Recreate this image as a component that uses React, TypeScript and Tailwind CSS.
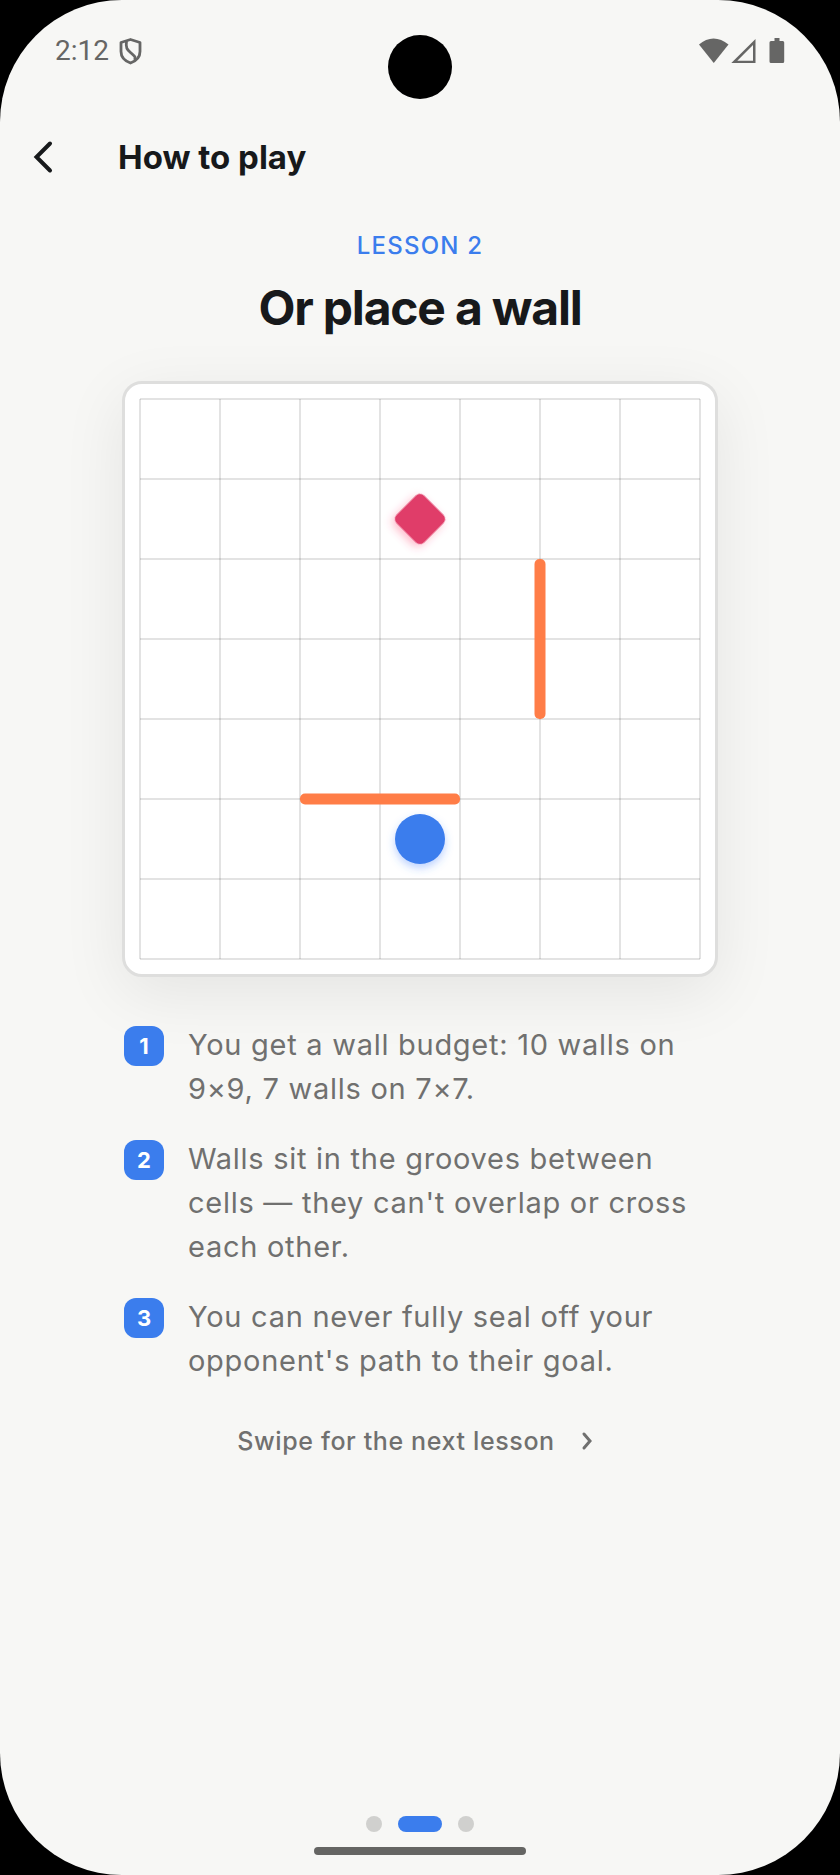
import React from 'react';

const steps = [
  'You get a wall budget: 10 walls on 9×9, 7 walls on 7×7.',
  "Walls sit in the grooves between cells — they can't overlap or cross each other.",
  "You can never fully seal off your opponent's path to their goal.",
];

const lessons = [1, 2, 3];
const gridLines = [0, 1, 2, 3, 4, 5, 6, 7];

const StatusBar = () => {
  return (
    <div className="flex items-start pt-[35px] px-[55px] text-[#666665]">
      <div className="flex flex-1 items-center gap-2 h-8">
        <span className="font-[Roboto,sans-serif] text-[28px] leading-8">2:12</span>
        <svg className="w-7 h-8" viewBox="0 0 28 32" fill="none" stroke="currentColor" strokeWidth="2.800">
          <path d="M13.500 4.500 23 7.500v9c0 5.500-4 9.500-9.500 11.500C8 26 4 22 4 16.500v-9z" strokeLinejoin="round" />
          <path d="M9.500 6C8.500 13 10 14.500 14 18S19 22 17.500 25" />
        </svg>
      </div>
      <div className="w-16 h-16 rounded-full bg-black" />
      <div className="flex flex-1 items-center justify-end h-8">
        <svg className="w-[86px] h-8" viewBox="0 0 86 32" fill="currentColor">
          <path d="M0 9.500C9 1.500 20 1.500 29.500 9.500L14.750 28z" />
          <path d="M56.500 4v24H32.300zM54 10 38.300 25.700H54z" fillRule="evenodd" />
          <path d="M75.500 3h5v3h3.200a1.500 1.500 0 0 1 1.500 1.500v19a1.500 1.500 0 0 1-1.500 1.500H72a1.500 1.500 0 0 1-1.500-1.500v-19A1.500 1.500 0 0 1 72 6h3.500z" />
        </svg>
      </div>
    </div>
  );
};

const Board = () => {
  return (
    <div className="w-full max-w-[596px] rounded-[20px] border-[3px] border-[#dededd] bg-white p-[15px] shadow-[0_16px_64px_rgba(0,0,0,0.08)]">
      <svg className="block w-full overflow-visible" viewBox="0 0 560 560" role="img" aria-label="Board with two walls">
        <defs>
          <filter id="redGlow" x="-50%" y="-50%" width="200%" height="200%">
            <feDropShadow dx="0" dy="4" stdDeviation="4" floodColor="#ff3c69" floodOpacity="0.35" />
          </filter>
          <filter id="blueGlow" x="-50%" y="-50%" width="200%" height="200%">
            <feDropShadow dx="0" dy="4" stdDeviation="4" floodColor="#3b7dff" floodOpacity="0.35" />
          </filter>
        </defs>
        <g stroke="#000" strokeOpacity="0.11" strokeWidth="2">
          {gridLines.map((n) => (
            <line key={`v${n}`} x1={n * 80} y1="0" x2={n * 80} y2="560" />
          ))}
          {gridLines.map((n) => (
            <line key={`h${n}`} x1="0" y1={n * 80} x2="560" y2={n * 80} />
          ))}
        </g>
        {/* walls */}
        <rect x="394.500" y="160" width="11" height="160" rx="5" fill="#ff7d47" />
        <rect x="160" y="394.500" width="160" height="11" rx="5" fill="#ff7d47" />
        {/* pieces */}
        <g transform="translate(280 120) rotate(45)">
          <rect x="-19.500" y="-19.500" width="39" height="39" rx="6" fill="#e03c69" filter="url(#redGlow)" />
        </g>
        <circle cx="280" cy="440" r="25" fill="#3b7ded" filter="url(#blueGlow)" />
      </svg>
    </div>
  );
};

const App = () => {
  return (
    <div className="min-h-screen flex bg-black font-[Inter,sans-serif]">
      <div className="flex flex-1 flex-col rounded-[122px] bg-[#f7f7f5]">
        <StatusBar />

        <header className="flex items-center h-[116px] px-6">
          <button className="w-12 h-12 text-[#17191b]" aria-label="Back">
            <svg className="w-9 h-12" viewBox="0 0 36 48" fill="none" stroke="currentColor" strokeWidth="4">
              <path d="M26 10.500 12.500 24 26 37.500" strokeLinecap="round" />
            </svg>
          </button>
          <h1 className="ml-[46px] text-[33px] leading-10 font-bold text-[#17191b]">How to play</h1>
        </header>

        <main className="flex flex-col items-center px-6 pt-[15px]">
          <p className="text-2xl leading-8 font-medium tracking-wider text-[#3b7ded]">LESSON 2</p>
          <h2 className="mt-4 mb-[43px] text-5xl leading-[60px] font-bold tracking-tight text-[#17191b]">
            Or place a wall
          </h2>

          <Board />

          <ol className="flex w-full max-w-[592px] flex-col gap-[26px] pt-[46px]">
            {steps.map((step, i) => (
              <li key={step} className="flex items-start gap-6">
                <span className="mt-[3px] flex w-10 h-10 shrink-0 items-center justify-center rounded-xl bg-[#3b7ded] text-[22px] font-bold text-white">
                  {i + 1}
                </span>
                <p className="text-[29px] leading-[44px] tracking-wide text-[#70706f]">{step}</p>
              </li>
            ))}
          </ol>

          <button className="mt-[38px] flex items-center gap-4 text-[25px] leading-10 font-medium tracking-wide text-[#70706f]">
            Swipe for the next lesson
            <svg className="w-8 h-8" viewBox="0 0 32 32" fill="none" stroke="currentColor" strokeWidth="3">
              <path d="m13 9 6 7-6 7" strokeLinecap="round" />
            </svg>
          </button>
        </main>

        <footer className="mt-auto flex flex-col items-center gap-[15px] pt-10 pb-5">
          <nav className="flex gap-4" aria-label="Lessons">
            {lessons.map((n) => (
              <button
                key={n}
                aria-label={`Lesson ${n}`}
                className={`h-4 rounded-full ${n === 2 ? 'w-11 bg-[#3b7ded]' : 'w-4 bg-[#d0d0ce]'}`}
              />
            ))}
          </nav>
          <div className="w-[212px] h-2 rounded-full bg-[#656563]" />
        </footer>
      </div>
    </div>
  );
};

export default App;
